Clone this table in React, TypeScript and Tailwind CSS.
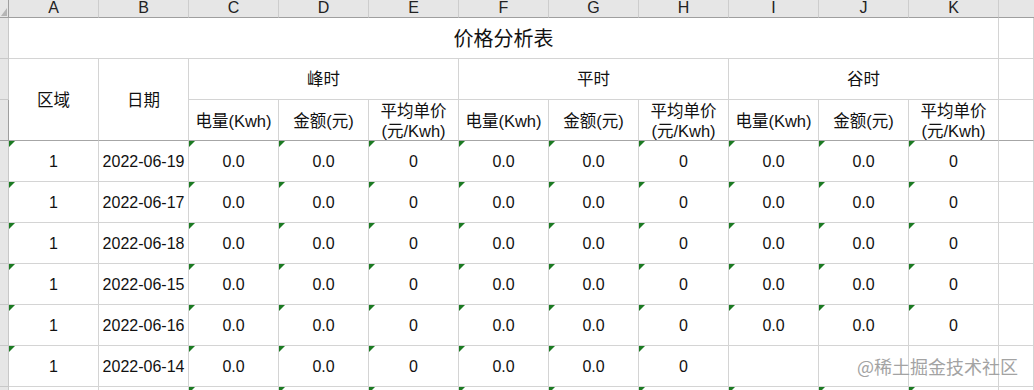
const letters = ["A", "B", "C", "D", "E", "F", "G", "H", "I", "J", "K"]
const dates = ["2022-06-19", "2022-06-17", "2022-06-18", "2022-06-15", "2022-06-16", "2022-06-14"]
const subHeads = ["电量(Kwh)", "金额(元)", "平均单价\n(元/Kwh)"]

const font = { fontFamily: '"Liberation Sans", "Noto Sans CJK SC", sans-serif' }

function Flag() {
  return <span className="absolute left-0 top-0 w-0 h-0 border-t-[6px] border-r-[6px] border-t-[#1b7a22] border-r-transparent" />
}

function Cell({ children, flag, className = "" }: { children?: React.ReactNode; flag?: boolean; className?: string }) {
  return (
    <div className={`relative flex items-center justify-center border-r border-b border-[#d4d4d4] text-center pt-px ${className}`}>
      {flag && <Flag />}
      {children}
    </div>
  )
}

function RowHead({ dark }: { dark?: boolean }) {
  return <div className={`bg-[#e6e6e6] border-r border-b ${dark ? "border-[#9f9f9f]" : "border-[#c8c8c8]"}`} />
}

export default function App() {
  const dataRow = (date: string, last: boolean) => {
    const vals = ["0.0", "0.0", "0"]
    return (
      <>
        <RowHead />
        <Cell flag>1</Cell>
        <Cell>{date}</Cell>
        {[0, 1, 2].map((g) =>
          vals.map((v, i) =>
            last && g === 2 ? <Cell key={`${g}${i}`} /> : <Cell key={`${g}${i}`} flag>{v}</Cell>
          )
        )}
        <Cell />
      </>
    )
  }

  return (
    <div className="relative w-[1034px] h-[390px] overflow-hidden bg-white text-[16px] text-[#111]" style={font}>
      <div className="grid grid-cols-[9px_repeat(11,90px)_1fr] grid-rows-[18px_repeat(10,41px)]">
        {/* column letters */}
        <div className="relative bg-[#e6e6e6] border-r border-b border-[#9f9f9f]">
          <span className="absolute right-[1px] bottom-[1px] w-0 h-0 border-b-[8px] border-l-[6px] border-b-[#b5b5b5] border-l-transparent" />
        </div>
        {letters.map((l) => (
          <div key={l} className="flex items-center justify-center bg-[#e6e6e6] border-r border-b border-r-[#cdcdcd] border-b-[#9f9f9f] leading-[16px] text-[#222] -mt-px">
            {l}
          </div>
        ))}
        <div className="bg-[#e6e6e6] border-b border-[#9f9f9f]" />

        {/* title */}
        <RowHead />
        <Cell className="col-span-11 text-[20px]">价格分析表</Cell>
        <Cell />

        {/* group headers */}
        <RowHead />
        <Cell className="row-span-2 text-[16.5px] border-b-[#a6a6a6]">区域</Cell>
        <Cell className="row-span-2 text-[16.5px] border-b-[#a6a6a6]">日期</Cell>
        <Cell className="col-span-3 text-[16.5px]">峰时</Cell>
        <Cell className="col-span-3 text-[16.5px]">平时</Cell>
        <Cell className="col-span-3 text-[16.5px]">谷时</Cell>
        <Cell />

        {/* sub headers */}
        <RowHead dark />
        {[0, 1, 2].map((g) =>
          subHeads.map((s, i) => (
            <Cell key={`${g}${i}`} className="text-[16.5px] leading-[20px] whitespace-pre-line border-b-[#a6a6a6]">
              {s}
            </Cell>
          ))
        )}
        <Cell className="border-b-[#a6a6a6]" />

        {dates.map((d, i) => (
          <div key={d} className="contents">{dataRow(d, i === dates.length - 1)}</div>
        ))}

        {/* partial next row */}
        <RowHead />
        <Cell />
        <Cell />
        {Array.from({ length: 9 }).map((_, i) => (
          <Cell key={i} flag />
        ))}
        <Cell />
      </div>

      <div className="absolute right-[16px] top-[354px] text-[18px] leading-[24px] text-[#a3a3a3]" style={{ fontFamily: '"Noto Sans CJK SC", sans-serif' }}>
        @稀土掘金技术社区
      </div>
    </div>
  )
}
